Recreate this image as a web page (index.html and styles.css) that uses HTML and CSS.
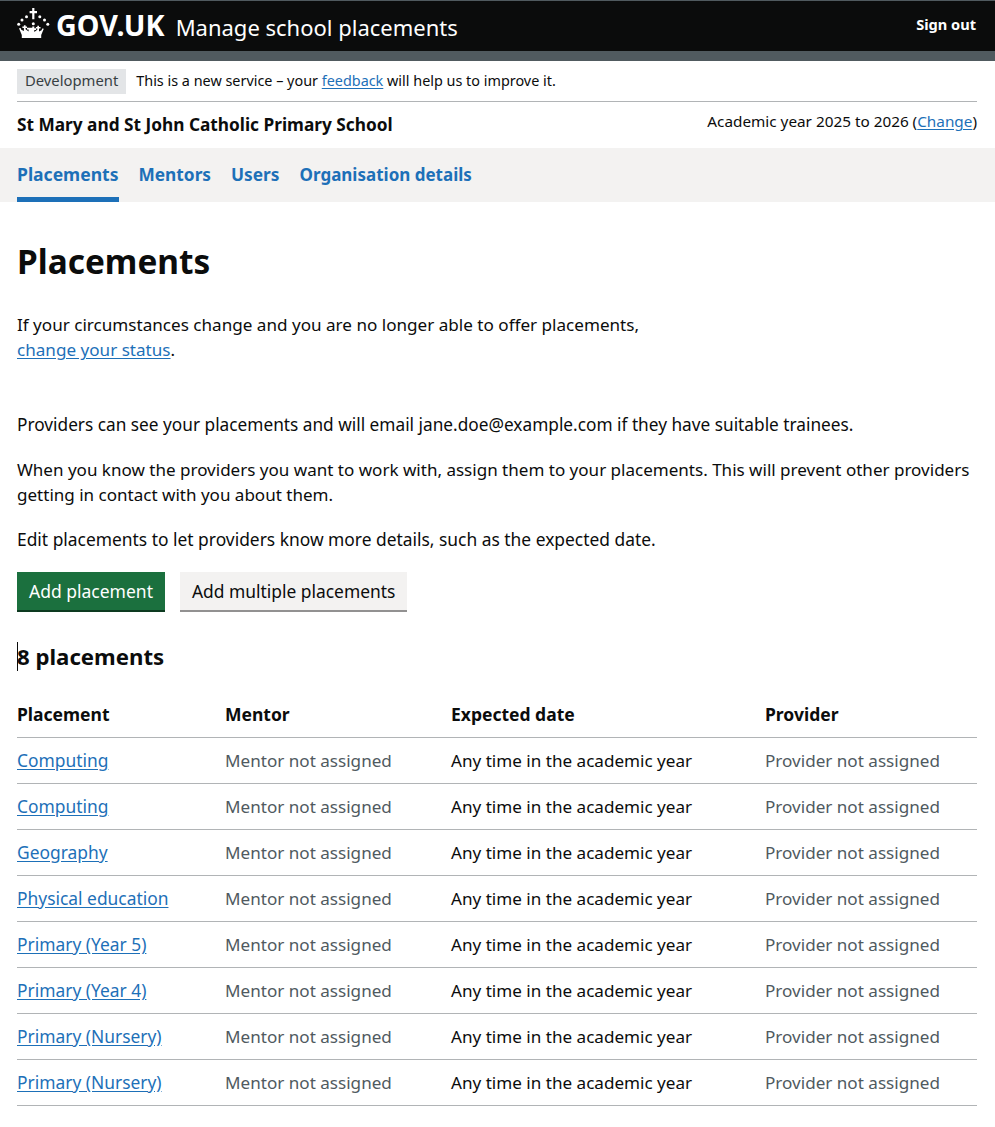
FILE: index.html
```html
<!DOCTYPE html>
<html lang="en">
<head>
    <meta charset="UTF-8">
    <title>Placements - Manage school placements</title>
    <link rel="stylesheet" href="styles.css">
</head>
<body>
    <header class="header">
        <div class="header-inner">
            <a class="logo" href="#">
                <svg class="crown" viewBox="0 0 33 30" width="33" height="30" aria-hidden="true">
                    <path fill="#fff" d="M15.2 0h2.2v3h2.6v2.200h-2.600v6h-2.200v-6h-2.600v-2.200h2.600z"/>
                    <circle fill="#fff" cx="9.500" cy="8.800" r="1.500"/>
                    <circle fill="#fff" cx="22.800" cy="8.800" r="1.500"/>
                    <circle fill="#fff" cx="5" cy="12" r="1.500"/>
                    <circle fill="#fff" cx="27.500" cy="12" r="1.500"/>
                    <circle fill="#fff" cx="1.700" cy="16.300" r="1.500"/>
                    <circle fill="#fff" cx="30.800" cy="16.300" r="1.500"/>
                    <circle fill="#fff" cx="16.300" cy="15.800" r="1.500"/>
                    <path fill="#fff" d="M15.300 18.500h2v1.700h1.800v1.700h-1.800v2.100l3-2.300v-1.100h-1.400v-1.500h1.400v-1.400h1.700v1.400h1.500v1.500h-1.500v2.800l2.600-1.200 .6-1.800 1.600 .4-2.600 6.200v3H4.800v-3L2 20.300l1.600-.4 .7 1.800 2.600 1.200v-2.800H5.400v-1.500h1.500v-1.400h1.700v1.400h1.400v1.500H8.600v1.100l3 2.300v-2.100H10v-1.700h1.600v0h3.700z"/>
                </svg>
                <span class="logo-text">GOV.UK</span>
            </a>
            <a class="service-name" href="#">Manage school placements</a>
            <a class="sign-out" href="#">Sign out</a>
        </div>
    </header>
    <div class="header-band"></div>

    <div class="container">
        <div class="phase-banner">
            <strong class="tag">Development</strong>
            <span>This is a new service – your <a href="#">feedback</a> will help us to improve it.</span>
        </div>
        <div class="org-bar">
            <strong class="org-name">St Mary and St John Catholic Primary School</strong>
            <span class="academic-year">Academic year 2025 to 2026 (<a href="#">Change</a>)</span>
        </div>
    </div>

    <nav class="primary-nav">
        <ul class="nav-list">
            <li><a class="current" href="#">Placements</a></li>
            <li><a href="#">Mentors</a></li>
            <li><a href="#">Users</a></li>
            <li><a class="nav-long" href="#">Organisation details</a></li>
        </ul>
    </nav>

    <main class="container main">
        <h1>Placements</h1>
        <p class="status-text">If your circumstances change and you are no longer able to offer placements,<br><a href="#">change your status</a>.</p>
        <p>Providers can see your placements and will email jane.doe@example.com if they have suitable trainees.</p>
        <p class="tight">When you know the providers you want to work with, assign them to your placements. This will prevent other providers getting in contact with you about them.</p>
        <p class="loose">Edit placements to let providers know more details, such as the expected date.</p>

        <div class="button-group">
            <a class="button" href="#">Add placement</a>
            <a class="button secondary" href="#">Add multiple placements</a>
        </div>

        <h2><span class="caret"></span>8 placements</h2>

        <table>
            <thead>
                <tr><th class="col-1">Placement</th><th class="col-2">Mentor</th><th class="col-3">Expected date</th><th>Provider</th></tr>
            </thead>
            <tbody>
                <tr><td><a href="#">Computing</a></td><td class="muted">Mentor not assigned</td><td>Any time in the academic year</td><td class="muted">Provider not assigned</td></tr>
                <tr><td><a href="#">Computing</a></td><td class="muted">Mentor not assigned</td><td>Any time in the academic year</td><td class="muted">Provider not assigned</td></tr>
                <tr><td><a href="#">Geography</a></td><td class="muted">Mentor not assigned</td><td>Any time in the academic year</td><td class="muted">Provider not assigned</td></tr>
                <tr><td><a href="#">Physical education</a></td><td class="muted">Mentor not assigned</td><td>Any time in the academic year</td><td class="muted">Provider not assigned</td></tr>
                <tr><td><a href="#">Primary (Year 5)</a></td><td class="muted">Mentor not assigned</td><td>Any time in the academic year</td><td class="muted">Provider not assigned</td></tr>
                <tr><td><a href="#">Primary (Year 4)</a></td><td class="muted">Mentor not assigned</td><td>Any time in the academic year</td><td class="muted">Provider not assigned</td></tr>
                <tr><td><a href="#">Primary (Nursery)</a></td><td class="muted">Mentor not assigned</td><td>Any time in the academic year</td><td class="muted">Provider not assigned</td></tr>
                <tr><td><a href="#">Primary (Nursery)</a></td><td class="muted">Mentor not assigned</td><td>Any time in the academic year</td><td class="muted">Provider not assigned</td></tr>
            </tbody>
        </table>
    </main>
</body>
</html>
```

FILE: styles.css
```css
* {
    box-sizing: border-box;
}

body {
    margin: 0;
    font-family: "Noto Sans", Arial, sans-serif;
    font-size: 17.25px;
    line-height: 25px;
    color: #0b0c0c;
    background-color: white;
}

a {
    color: #1d70b8;
    text-underline-offset: 2px;
}

.header {
    height: 51px;
    background-color: #0b0c0c;
    border-top: 1px solid #505a5f;
    color: white;
}

.header-inner {
    display: flex;
    align-items: center;
    height: 50px;
    padding: 0 19px 0 17px;
}

.header a {
    color: white;
    text-decoration: none;
}

.logo {
    display: flex;
    align-items: center;
    gap: 6px;
    margin-bottom: 2px;
}

.crown {
    margin-top: -4px;
}

.logo-text {
    font-size: 28.7px;
    font-weight: 700;
    line-height: 30px;
}

.service-name {
    margin-left: 11px;
    padding-top: 2px;
    font-size: 22px;
}

.sign-out {
    margin-left: auto;
    margin-bottom: 4px;
    font-size: 14.6px;
    font-weight: 700;
}

.header-band {
    height: 10px;
    background-color: #505a5f;
}

.container {
    padding: 0 18px 0 17px;
}

.phase-banner {
    display: flex;
    align-items: center;
    gap: 10px;
    height: 41px;
    padding-bottom: 2px;
    border-bottom: 1px solid #b1b4b6;
    font-size: 14.4px;
}

.tag {
    margin-top: 2px;
    padding: 0 8px;
    height: 25px;
    font-size: 14.8px;
    line-height: 23px;
    font-weight: 400;
    background-color: #e3e5e7;
    color: #383f43;
}

.org-bar {
    display: flex;
    justify-content: space-between;
    height: 46px;
    padding-top: 10px;
}

.org-name {
    font-size: 17.25px;
}

.academic-year {
    margin-top: -3px;
    font-size: 15.3px;
}

.primary-nav {
    height: 54px;
    background-color: #f3f2f1;
    padding: 0 17px;
}

.nav-list {
    display: flex;
    gap: 20px;
    margin: 0;
    padding: 0;
    list-style: none;
}

.nav-list a {
    display: block;
    height: 54px;
    padding-top: 14px;
    font-size: 17.3px;
    font-weight: 700;
    text-decoration: none;
}

.nav-list a.current {
    font-size: 17.55px;
    border-bottom: 5px solid #1d70b8;
}

.nav-list a.nav-long {
    font-size: 17px;
}

h1 {
    margin: 37px 0 28px;
    font-size: 33.4px;
    line-height: 45px;
}

p {
    margin: 0 0 20px;
}

.status-text {
    margin-bottom: 50px;
    font-size: 17.1px;
}

.tight {
    font-size: 17.05px;
}

.loose {
    font-size: 17.4px;
}

.button-group {
    display: flex;
    gap: 15px;
    margin-top: 7px;
}

.button {
    display: block;
    height: 38px;
    padding: 7px 12px;
    font-size: 17.5px;
    color: white;
    text-decoration: none;
    background-color: #1b703e;
    box-shadow: 0 2px 0 #0d3a20;
}

.button.secondary {
    font-size: 17.4px;
    color: #0b0c0c;
    background-color: #f3f2f1;
    box-shadow: 0 2px 0 #929191;
}

h2 {
    position: relative;
    margin: 32px 0 20px;
    font-size: 22.2px;
    line-height: 30px;
}

.caret {
    position: absolute;
    left: 0;
    top: 0;
    width: 1px;
    height: 29px;
    background-color: #0b0c0c;
}

table {
    width: 100%;
    border-collapse: collapse;
    table-layout: fixed;
}

th, td {
    height: 46px;
    padding: 0;
    font-size: 17.1px;
    text-align: left;
    border-bottom: 1px solid #b1b4b6;
}

th {
    height: 45px;
    font-size: 17.5px;
}

td a {
    font-size: 17.4px;
}

.col-1 {
    width: 208px;
}

.col-2 {
    width: 226px;
}

.col-3 {
    width: 314px;
}

.muted {
    color: #505a5f;
}
```
